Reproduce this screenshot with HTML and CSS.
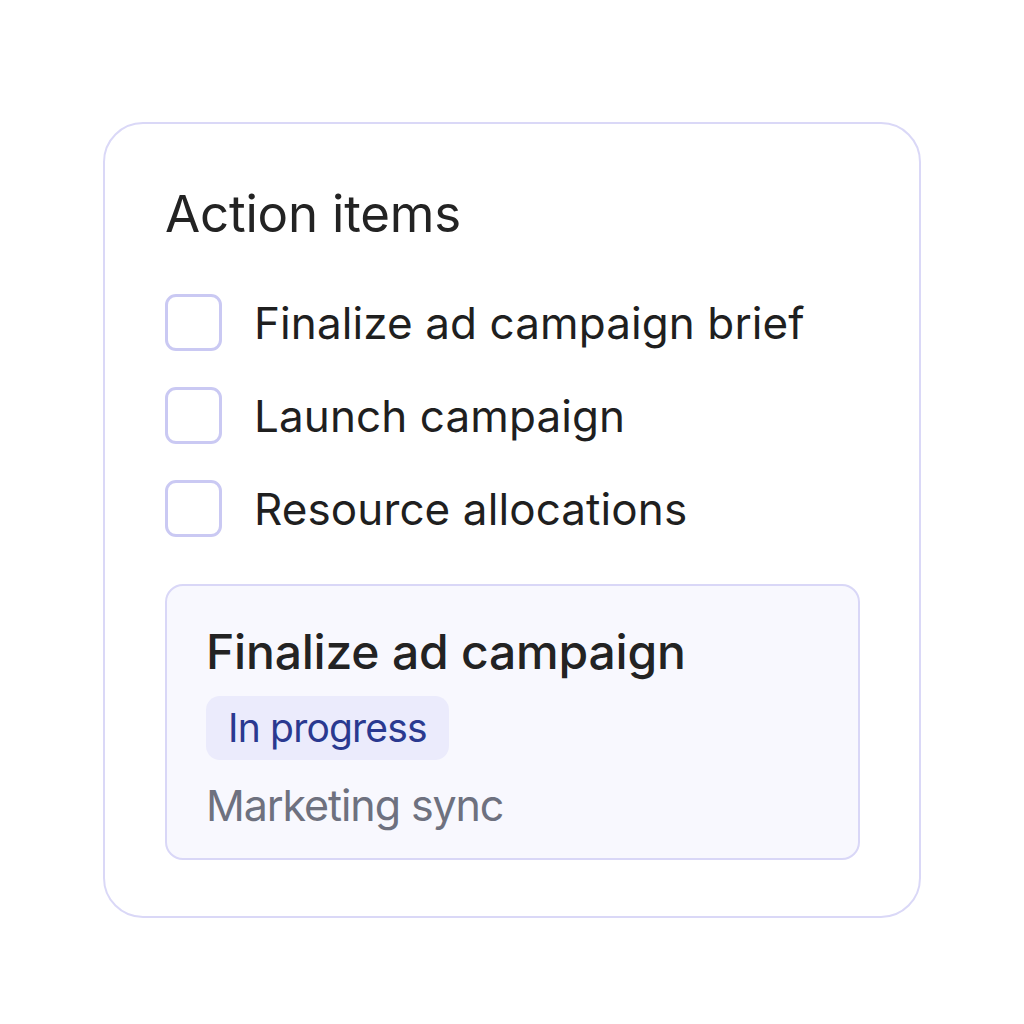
FILE: index.html
```html
<!DOCTYPE html>
<html>
<head>
<meta charset="utf-8">
<link rel="stylesheet" href="styles.css">
</head>
<body>
<div class="page">
  <div class="card">
    <h1 class="title">Action items</h1>
    <ul class="items">
      <li class="item"><span class="box"></span><span class="label">Finalize ad campaign brief</span></li>
      <li class="item"><span class="box"></span><span class="label">Launch campaign</span></li>
      <li class="item"><span class="box"></span><span class="label">Resource allocations</span></li>
    </ul>
    <div class="detail">
      <div class="detail-title">Finalize ad campaign</div>
      <span class="badge">In progress</span>
      <div class="meta">Marketing sync</div>
    </div>
  </div>
</div>
</body>
</html>
```
FILE: styles.css
```css
* { box-sizing: border-box; }
html, body { margin: 0; padding: 0; background: #ffffff; }
body { font-family: Inter, "Noto Sans", sans-serif; color: #222222; }
.page { width: 1024px; height: 1024px; padding: 122px 0 0 103px; }
.card {
  width: 818px;
  height: 796px;
  border: 2px solid #dad8f7;
  border-radius: 40px;
  padding: 0 0 0 60px;
  background: #fff;
  display: flex;
  flex-direction: column;
}
.title {
  margin: 60px 0 0 0;
  font-size: 51px;
  font-weight: 400;
  line-height: 60px;
  color: #232323;
  letter-spacing: -0.2px;
}
.items { list-style: none; margin: 50px 0 0 0; padding: 0; display: flex; flex-direction: column; gap: 36px; }
.item { display: flex; align-items: center; gap: 32px; height: 57px; }
.box {
  width: 57px; height: 57px;
  border: 3px solid #cac9f3;
  border-radius: 11px;
  flex: none;
}
.label { font-size: 44px; line-height: 52px; color: #1f1f1f; letter-spacing: 0.1px; }
.detail {
  margin-top: 47px;
  width: 695px;
  height: 276px;
  background: #f8f8fe;
  border: 2px solid #d9d7f7;
  border-radius: 18px;
  padding: 38px 0 0 39px;
  display: flex;
  flex-direction: column;
  align-items: flex-start;
}
.detail-title { font-size: 48px; font-weight: 500; line-height: 56px; color: #232323; letter-spacing: -0.2px; }
.badge {
  margin-top: 16px;
  background: #ebebfc;
  color: #2a3990;
  font-size: 39px;
  line-height: 64px;
  height: 64px;
  padding: 0 22px;
  border-radius: 14px;
  letter-spacing: -0.8px;
}
.meta { margin-top: 20px; font-size: 43px; line-height: 50px; color: #6e717f; letter-spacing: -1.1px; }
```
